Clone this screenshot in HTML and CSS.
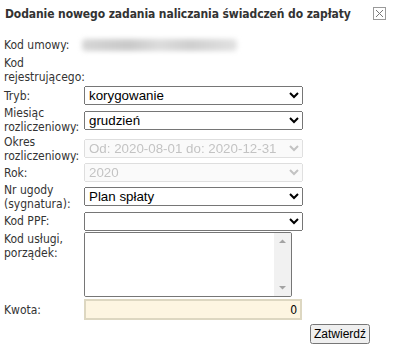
FILE: index.html
```html
<!DOCTYPE html>
<html lang="pl">
<head>
<meta charset="utf-8">
<title>Dodanie nowego zadania</title>
<link rel="stylesheet" href="styles.css">
</head>
<body>
<div class="dialog">
  <div class="header">
    <div class="title">Dodanie nowego zadania naliczania świadczeń do zapłaty</div>
    <span class="close" aria-label="Zamknij">
      <svg width="13" height="13" viewBox="0 0 13 13"><rect x="0.5" y="0.5" width="12" height="12" fill="#fff" stroke="#9a9a9a"/><path d="M3 3 L10 10 M10 3 L3 10" stroke="#777" stroke-width="1"/></svg>
    </span>
  </div>
  <div class="form">
    <div class="row r-umowy"><div class="label">Kod umowy:</div><div class="value"><span class="blur"></span></div></div>
    <div class="row r-rej"><div class="label">Kod rejestrującego:</div><div class="value"></div></div>
    <div class="row r-tryb"><div class="label">Tryb:</div><div class="value"><select class="sel"><option>korygowanie</option></select></div></div>
    <div class="row r-mies"><div class="label">Miesiąc rozliczeniowy:</div><div class="value"><select class="sel"><option>grudzień</option></select></div></div>
    <div class="row r-okres"><div class="label">Okres rozliczeniowy:</div><div class="value"><select class="sel" disabled><option>Od: 2020-08-01 do: 2020-12-31</option></select></div></div>
    <div class="row r-rok"><div class="label">Rok:</div><div class="value"><select class="sel" disabled><option>2020</option></select></div></div>
    <div class="row r-ugoda"><div class="label">Nr ugody (sygnatura):</div><div class="value"><select class="sel"><option>Plan spłaty</option></select></div></div>
    <div class="row r-ppf"><div class="label">Kod PPF:</div><div class="value"><select class="sel"><option></option></select></div></div>
    <div class="row r-usl"><div class="label">Kod usługi, porządek:</div>
      <div class="value">
        <div class="area-box">
          <textarea class="area"></textarea>
          <div class="vscroll">
            <svg width="17" height="17" viewBox="0 0 17 17"><path d="M5 10 L8.5 6.5 L12 10 Z" fill="#a3a3a3"/></svg>
            <svg width="17" height="17" viewBox="0 0 17 17"><path d="M5 7 L8.5 10.5 L12 7 Z" fill="#a3a3a3"/></svg>
          </div>
        </div>
      </div>
    </div>
    <div class="row r-kwota"><div class="label">Kwota:</div><div class="value"><input class="amount" type="text" value="0"></div></div>
  </div>
  <div class="actions"><button class="submit" type="button">Zatwierdź</button></div>
</div>
</body>
</html>
```
FILE: styles.css
```css
html, body {
  margin: 0;
  padding: 0;
  background: #fff;
}
body {
  font-family: "DejaVu Sans Condensed", "DejaVu Sans", sans-serif;
  font-size: 12px;
  color: #333;
}
.dialog {
  width: 393px;
  height: 353px;
  box-sizing: border-box;
  padding: 0 0 0 4px;
}
.header {
  display: flex;
  align-items: flex-start;
  height: 35px;
}
.title {
  font-weight: bold;
  font-size: 12px;
  letter-spacing: -0.1px;
  white-space: nowrap;
  color: #333;
  padding: 7px 0 0 1px;
  flex: 1;
}
.close {
  display: block;
  margin: 7px 7px 0 0;
  width: 13px;
  height: 13px;
}
.close svg { display: block; }
.form {
  display: flex;
  flex-direction: column;
}
.row {
  display: grid;
  grid-template-columns: 80px 220px;
  align-items: center;
}
.label {
  line-height: 14px;
  color: #333;
}
.r-umowy { height: 20px; }
.r-rej { height: 30px; }
.r-tryb { height: 21px; }
.r-mies { height: 28px; }
.r-okres { height: 29px; }
.r-rok { height: 19px; }
.r-ugoda { height: 29px; }
.r-ppf { height: 20px; }
.r-usl { height: 67px; align-items: start; }
.r-usl .label { padding-top: 1px; }
.r-kwota { height: 23px; }
.value { display: flex; align-items: center; }
.blur {
  display: block;
  margin-left: -2px;
  width: 155px;
  height: 12px;
  background: linear-gradient(90deg, #d6d6d6 0%, #c9c9c9 30%, #dcdcdc 50%, #cfcfcf 70%, #e2e2e2 100%);
  filter: blur(2.5px);
  border-radius: 4px;
}
.sel {
  width: 219px;
  height: 19px;
  box-sizing: border-box;
  margin: 0;
  font-family: "Liberation Sans", Arial, sans-serif;
  font-size: 13.333px;
  color: #000;
}
.sel:disabled { color: #aaa; }
.area-box {
  display: flex;
  margin-top: 1px;
  width: 208px;
  height: 65px;
  box-sizing: border-box;
  border: 1px solid #767676;
  border-radius: 2px;
  overflow: hidden;
  background: #fff;
}
.area {
  flex: 1;
  min-width: 0;
  margin: 0;
  border: none;
  outline: none;
  resize: none;
  overflow: hidden;
  padding: 2px;
  font-family: "Liberation Sans", Arial, sans-serif;
  font-size: 13px;
}
.vscroll {
  width: 17px;
  background: #f1f1f1;
  display: flex;
  flex-direction: column;
  justify-content: space-between;
}
.vscroll svg { display: block; }
.amount {
  display: block;
  margin: 0;
  width: 218px;
  height: 21px;
  box-sizing: border-box;
  border: 2px solid #ddd7c1;
  background: #fdf5e1;
  text-align: right;
  padding: 0 3px 0 2px;
  font-family: "DejaVu Sans Condensed", "DejaVu Sans", sans-serif;
  font-size: 12px;
  color: #000;
  outline: none;
}
.actions {
  display: flex;
  justify-content: flex-end;
  width: 366px;
  padding-top: 3px;
}
.submit {
  margin: 0;
  height: 20px;
  padding: 0 2px;
  font-family: "Liberation Sans", Arial, sans-serif;
  font-size: 12px;
  color: #000;
}
```
